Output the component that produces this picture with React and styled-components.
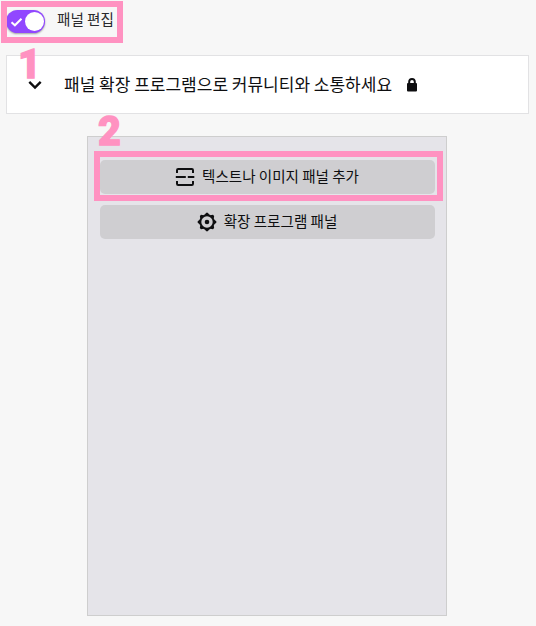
import React from 'react';
import styled, { createGlobalStyle } from 'styled-components';

const Global = createGlobalStyle`
  * { box-sizing: border-box; }
  body {
    margin: 0;
    background: #f7f7f7;
    color: #0e0e10;
    font-family: "Noto Sans CJK KR", "Noto Sans", sans-serif;
  }
`;

const Page = styled.main`
  position: relative;
  width: 536px;
  height: 626px;
  overflow: hidden;
  display: flex;
  flex-direction: column;
  padding-left: 6px;
`;

const EditRow = styled.div`
  height: 55px;
  padding-top: 10px;
  display: flex;
  align-items: flex-start;
  gap: 12px;
`;

const Toggle = styled.button`
  width: 39px;
  height: 23px;
  padding: 0 1px 0 4px;
  border: 0;
  border-radius: 12px;
  background: #9147ff;
  box-shadow: 0 1px 2px rgba(0, 0, 0, 0.35);
  display: flex;
  align-items: center;
  justify-content: space-between;
`;

const Knob = styled.span`
  width: 19px;
  height: 19px;
  border-radius: 50%;
  background: #fff;
`;

const EditLabel = styled.span`
  margin-top: -2px;
  font-size: 14.6px;
  line-height: 22px;
  color: #2a2a2d;
  white-space: nowrap;
`;

const Notice = styled.section`
  width: 523px;
  height: 59px;
  border: 1px solid #e2e2e4;
  background: #fff;
  display: flex;
  align-items: center;
  padding-left: 21px;
`;

const NoticeTitle = styled.h1`
  margin: 0 14px 2px 22px;
  font-size: 17px;
  line-height: 26px;
  font-weight: 400;
  white-space: nowrap;
`;

const Panel = styled.section`
  width: 360px;
  height: 480px;
  margin: 22px 0 0 81px;
  padding: 23px 11px 0 12px;
  border: 1px solid #cecece;
  background: #e5e4e9;
  display: flex;
  flex-direction: column;
  gap: 11px;
`;

const PanelButton = styled.button`
  height: 34px;
  padding: 0 1px 0 0;
  border: 0;
  border-radius: 5px;
  background: #cfced1;
  color: inherit;
  font: 400 14.55px/22px "Noto Sans CJK KR", sans-serif;
  display: flex;
  align-items: center;
  justify-content: center;
  gap: 7px;
  white-space: nowrap;
`;

const ButtonLabel = styled.span`
  padding-bottom: 2px;
`;

const Outline = styled.div`
  position: absolute;
  left: ${(p) => p.$x}px;
  top: ${(p) => p.$y}px;
  width: ${(p) => p.$w}px;
  height: ${(p) => p.$h}px;
  border: 6px solid #ff92c1;
  pointer-events: none;
`;

const StepNumber = styled.span`
  position: absolute;
  left: ${(p) => p.$x}px;
  top: ${(p) => p.$y}px;
  color: #ff92c1;
  font: 900 41.5px/44px Roboto, sans-serif;
  -webkit-text-stroke: 1.3px #ff92c1;
  transform: scaleX(0.95);
  transform-origin: left;
  pointer-events: none;
`;

const Check = () => (
  <svg width="13" height="12" viewBox="0 0 13 12" fill="none">
    <path d="M1.500 6.200 4.900 9.300 11.500 2.700" stroke="#fff" strokeWidth="2" />
  </svg>
);

const Chevron = () => (
  <svg width="14" height="10" viewBox="0 0 14 10" fill="none">
    <path d="M1.300 1.800 7 7.500 12.700 1.800" stroke="#0e0e10" strokeWidth="2.400" />
  </svg>
);

const Lock = () => (
  <svg width="12" height="16" viewBox="0 0 12 16">
    <path
      fillRule="evenodd"
      fill="#0e0e10"
      d="M2.200 6V4.800a3.800 3.800 0 0 1 7.600 0V6H10a1 1 0 0 1 1 1v6.500a1 1 0 0 1-1 1H2a1 1 0 0 1-1-1V7a1 1 0 0 1 1-1h.2Zm2 0h3.600V4.800a1.800 1.800 0 0 0-3.600 0V6Z"
    />
  </svg>
);

const SplitPanel = () => (
  <svg width="20" height="20" viewBox="0 0 20 20" fill="none" stroke="#0e0e10" strokeWidth="2">
    <path d="M2 6V3.200Q2 2 3.200 2H16.800Q18 2 18 3.200V6M2 14V16.800Q2 18 3.200 18H16.800Q18 18 18 16.800V14M.8 10H10.800M12.800 10H19.300" />
  </svg>
);

const TEETH = [0, 45, 90, 135, 180, 225, 270, 315];

const Gear = () => (
  <svg width="20" height="20" viewBox="0 0 20 20">
    <circle cx="10" cy="10" r="6.700" fill="none" stroke="#0e0e10" strokeWidth="2" />
    {TEETH.map((angle) => (
      <path key={angle} d="M7.500 3 9.200.7h1.600l1.700 2.300Z" fill="#0e0e10" transform={`rotate(${angle} 10 10)`} />
    ))}
    <circle cx="10" cy="10" r="2.300" fill="#0e0e10" />
  </svg>
);

export default function App() {
  return (
    <>
      <Global />
      <Page>
        <EditRow>
          <Toggle role="switch" aria-checked="true" aria-label="패널 편집">
            <Check />
            <Knob />
          </Toggle>
          <EditLabel>패널 편집</EditLabel>
        </EditRow>
        <Notice>
          <Chevron />
          <NoticeTitle>패널 확장 프로그램으로 커뮤니티와 소통하세요</NoticeTitle>
          <Lock />
        </Notice>
        <Panel>
          <PanelButton>
            <SplitPanel />
            <ButtonLabel>텍스트나 이미지 패널 추가</ButtonLabel>
          </PanelButton>
          <PanelButton>
            <Gear />
            <ButtonLabel>확장 프로그램 패널</ButtonLabel>
          </PanelButton>
        </Panel>
        <Outline $x={1} $y={1} $w={122} $h={42} />
        <Outline $x={94} $y={151} $w={349} $h={50} />
        <StepNumber $x={18} $y={42}>1</StepNumber>
        <StepNumber $x={98} $y={109}>2</StepNumber>
      </Page>
    </>
  );
}
